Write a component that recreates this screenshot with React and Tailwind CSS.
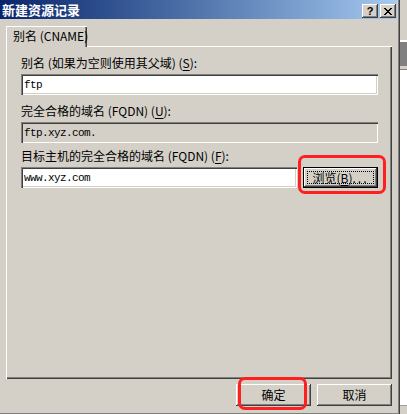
import React from 'react';

const sunken =
  'shadow-[inset_1px_1px_#808080,inset_2px_2px_#404040,inset_-1px_-1px_#ffffff,inset_-2px_-2px_#d4d0c8]';
const raised =
  'shadow-[inset_-1px_-1px_#404040,inset_1px_1px_#ffffff,inset_-2px_-2px_#808080]';

function Field({ value, width, disabled }) {
  return (
    <div
      className={`flex h-[21px] items-center pl-[3px] ${sunken} ${width} ${
        disabled ? 'bg-[#d4d0c8]' : 'bg-white'
      }`}
    >
      <span className="font-['Liberation_Mono',monospace] text-[11px] leading-[12px] tracking-[-0.6px] text-black">
        {value}
      </span>
    </div>
  );
}

function Label({ children, className = '' }) {
  return <div className={`whitespace-nowrap text-[12px] leading-[12px] text-black ${className}`}>{children}</div>;
}

function Btn({ children }) {
  return (
    <div
      className={`flex h-[22px] w-[75px] items-center justify-center bg-[#d4d0c8] text-[12px] leading-[12px] ${raised}`}
    >
      {children}
    </div>
  );
}

function RedMark({ className }) {
  return (
    <div
      className={`pointer-events-none absolute rounded-[7px] border-[3px] border-[#ff1f1f] ${className}`}
    />
  );
}

export default function App() {
  return (
    <div className="flex h-[414px] w-[407px] overflow-hidden bg-[#d4d0c8] font-['Noto_Sans_CJK_SC',sans-serif]">
      {/* dialog */}
      <div className="flex h-[415px] w-[400px] shrink-0 flex-col bg-[#d4d0c8] shadow-[inset_-1px_0_#404040,inset_-2px_0_#808080,inset_0_-1px_#404040,inset_0_-2px_#808080]">
        {/* title bar */}
        <div className="mr-[3px] flex h-[19px] items-start justify-between bg-gradient-to-r from-[#0a246a] to-[#a6caf0] pl-[2px] pr-[1px]">
          <span className="mt-[2px] text-[13px] font-bold leading-[15px] text-white">新建资源记录</span>
          <div className="mt-[4px] flex gap-[2px]">
            <div className={`flex h-[14px] w-[16px] items-center justify-center bg-[#d4d0c8] ${raised}`}>
              <span className="font-['Liberation_Sans',sans-serif] text-[11px] font-bold leading-[11px] text-black">?</span>
            </div>
            <div className={`flex h-[14px] w-[16px] items-center justify-center bg-[#d4d0c8] ${raised}`}>
              <svg width="8" height="7" viewBox="0 0 8 7" shapeRendering="crispEdges">
                <path d="M0 0h2v1h-2zM6 0h2v1h-2zM1 1h2v1h-2zM5 1h2v1h-2zM2 2h4v1h-4zM3 3h2v1h-2zM2 4h4v1h-4zM1 5h2v1h-2zM5 5h2v1h-2zM0 6h2v1h-2zM6 6h2v1h-2z" fill="#000" />
              </svg>
            </div>
          </div>
        </div>

        {/* body */}
        <div className="px-[6px]">
          <div className="mt-[7px] flex">
            <div className="relative z-10 -mb-px h-[21px] w-[81px] whitespace-nowrap bg-[#d4d0c8] pl-[7px] pt-[4px] text-[12px] leading-[12px] text-black shadow-[inset_1px_1px_#ffffff,inset_-1px_0_#404040,inset_-2px_0_#808080]">
              别名 (CNAME)
            </div>
          </div>

          <div className="h-[333px] w-[386px] pl-[15px] pt-[11px] shadow-[inset_1px_1px_#ffffff,inset_-1px_-1px_#404040,inset_-2px_-2px_#808080]">
            <Label>
              别名 (如果为空则使用其父域) (<u className="underline-offset-2">S</u>):
            </Label>
            <div className="mt-[5px]">
              <Field value="ftp" width="w-[357px]" />
            </div>

            <Label className="mt-[10px]">
              完全合格的域名 (FQDN) (<u className="underline-offset-2">U</u>):
            </Label>
            <div className="mt-[5px]">
              <Field value="ftp.xyz.com." width="w-[357px]" disabled />
            </div>

            <Label className="mt-[7px]">
              目标主机的完全合格的域名 (FQDN) (<u className="underline-offset-2">F</u>):
            </Label>
            <div className="mt-[5px] flex gap-[6px]">
              <Field value="www.xyz.com" width="w-[276px]" />
              <div className="relative">
                <div className="flex h-[21px] w-[75px] items-center justify-center border border-black bg-[#d4d0c8] shadow-[inset_-1px_-1px_#404040,inset_1px_1px_#ffffff,inset_-2px_-2px_#808080]">
                  <div className="flex h-[13px] w-[67px] items-center justify-center whitespace-nowrap border border-dotted border-black text-[12px] leading-[12px] text-black">
                    浏览(<u className="underline-offset-2">B</u>)<span className="tracking-[2px]">...</span>
                  </div>
                </div>
                <RedMark className="-bottom-[6px] -left-[5px] -right-[8px] -top-[12px]" />
              </div>
            </div>
          </div>

          <div className="mt-[5px] flex gap-[6px] pl-[230px]">
            <div className="relative">
              <Btn>确定</Btn>
              <RedMark className="-bottom-[4px] -top-[7px] left-[2px] right-[4px]" />
            </div>
            <Btn>取消</Btn>
          </div>
        </div>
      </div>

      {/* window behind */}
      <div className="flex w-[7px] flex-col">
        <div className="h-[40px] bg-[#d4d0c8]" />
        <div className="h-[2px] bg-white" />
        <div className="h-[24px] bg-[#808080]" />
        <div className="h-[3px] bg-[#d4d0c8]" />
        <div className="h-[1px] bg-[#808080]" />
        <div className="h-[335px] bg-white" />
        <div className="h-[1px] bg-[#a0a0a0]" />
        <div className="flex-1 bg-[#d4d0c8]" />
      </div>
    </div>
  );
}
